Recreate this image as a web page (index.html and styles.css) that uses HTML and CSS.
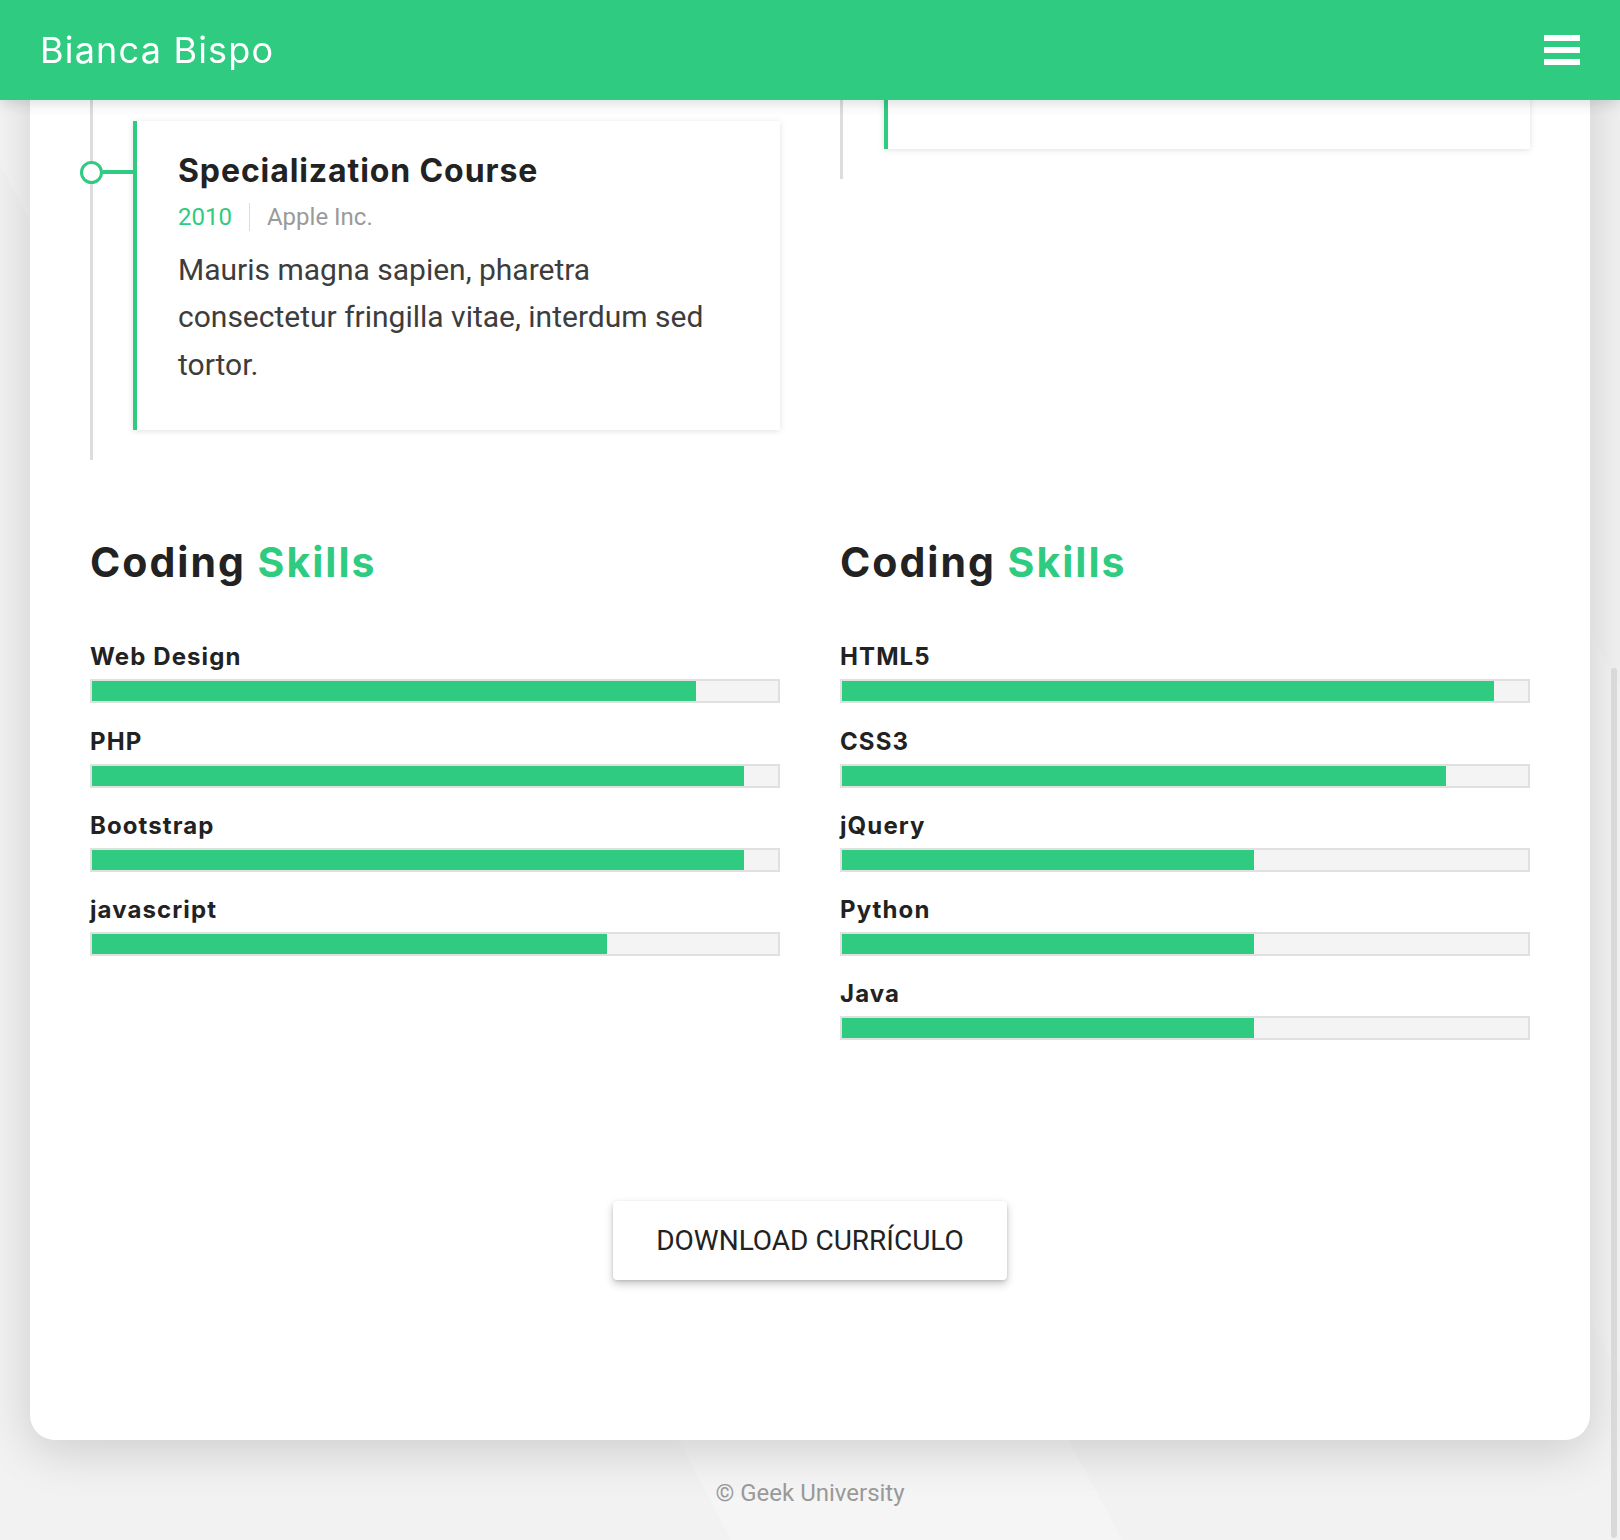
FILE: index.html
```html
<!DOCTYPE html>
<html lang="pt-BR">
<head>
<meta charset="utf-8">
<title>Bianca Bispo</title>
<link rel="stylesheet" href="styles.css">
</head>
<body>
<header class="topbar">
  <span class="brand">Bianca Bispo</span>
  <button class="menu" aria-label="Menu"><span></span><span></span><span></span></button>
</header>

<main class="sheet">
  <section class="grid timeline-row">
    <div class="timeline timeline--left">
      <article class="entry">
        <span class="entry-dot"></span>
        <h3 class="entry-title">Specialization Course</h3>
        <p class="entry-meta"><span class="entry-year">2010</span><span class="entry-org">Apple Inc.</span></p>
        <p class="entry-text">Mauris magna sapien, pharetra consectetur fringilla vitae, interdum sed tortor.</p>
      </article>
    </div>
    <div class="timeline timeline--right">
      <article class="entry entry--tail"></article>
    </div>
  </section>

  <section class="grid skills-row">
    <div class="skills">
      <h2 class="skills-title">Coding <span class="accent">Skills</span></h2>
      <div class="skill"><div class="skill-name">Web Design</div><div class="skill-bar"><div class="skill-fill" style="width:88%"></div></div></div>
      <div class="skill"><div class="skill-name">PHP</div><div class="skill-bar"><div class="skill-fill" style="width:95%"></div></div></div>
      <div class="skill"><div class="skill-name">Bootstrap</div><div class="skill-bar"><div class="skill-fill" style="width:95%"></div></div></div>
      <div class="skill"><div class="skill-name">javascript</div><div class="skill-bar"><div class="skill-fill" style="width:75%"></div></div></div>
    </div>
    <div class="skills">
      <h2 class="skills-title">Coding <span class="accent">Skills</span></h2>
      <div class="skill"><div class="skill-name">HTML5</div><div class="skill-bar"><div class="skill-fill" style="width:95%"></div></div></div>
      <div class="skill"><div class="skill-name">CSS3</div><div class="skill-bar"><div class="skill-fill" style="width:88%"></div></div></div>
      <div class="skill"><div class="skill-name">jQuery</div><div class="skill-bar"><div class="skill-fill" style="width:60%"></div></div></div>
      <div class="skill"><div class="skill-name">Python</div><div class="skill-bar"><div class="skill-fill" style="width:60%"></div></div></div>
      <div class="skill"><div class="skill-name">Java</div><div class="skill-bar"><div class="skill-fill" style="width:60%"></div></div></div>
    </div>
  </section>

  <div class="actions">
    <a class="btn" href="#">DOWNLOAD CURRÍCULO</a>
  </div>
</main>

<footer class="footer">© Geek University</footer>
<div class="scroll-thumb" aria-hidden="true"></div>
</body>
</html>
```

FILE: styles.css
```css
* { box-sizing: border-box; }

html { min-height: 100%; }
html, body { margin: 0; padding: 0; }

body {
  font-family: Roboto, "Liberation Sans", Arial, sans-serif;
  color: #222;
  background-color: #f2f2f2;
  background-image:
    linear-gradient(62deg, rgba(255,255,255,0) 0, rgba(255,255,255,0) 30%, rgba(255,255,255,0.25) 30%, rgba(255,255,255,0.25) 46%, rgba(255,255,255,0) 46%),
    linear-gradient(62deg, rgba(255,255,255,0) 0, rgba(255,255,255,0) 70%, rgba(255,255,255,0.18) 70%, rgba(255,255,255,0.18) 85%, rgba(255,255,255,0) 85%);
  background-attachment: fixed;
}

/* ---------- header ---------- */
.topbar {
  position: fixed;
  top: 0;
  left: 0;
  right: 0;
  height: 100px;
  z-index: 10;
  background: #2fcb80;
  display: flex;
  align-items: center;
  justify-content: space-between;
  padding: 0 40px 0 40px;
  box-shadow: 0 2px 14px rgba(0,0,0,0.16);
}

.brand {
  font-family: Inter, "Noto Sans", sans-serif;
  font-weight: 400;
  font-size: 36px;
  line-height: 1;
  letter-spacing: 1.2px;
  color: #fff;
}

.menu {
  width: 36px;
  height: 30px;
  padding: 0;
  border: 0;
  background: none;
  display: flex;
  flex-direction: column;
  justify-content: space-between;
  cursor: pointer;
}
.menu span {
  display: block;
  height: 6px;
  background: #fff;
}

/* ---------- sheet ---------- */
.sheet {
  margin: 0 30px;
  padding: 0 60px 160px;
  background: #fff;
  border-radius: 0 0 25px 25px;
  box-shadow: 0 10px 50px rgba(0,0,0,0.16);
}

.grid {
  display: grid;
  grid-template-columns: 1fr 1fr;
  column-gap: 60px;
  align-items: start;
}

/* ---------- timeline ---------- */
.timeline {
  border-left: 3px solid #dddddd;
}
.timeline--left { padding: 121px 0 30px; }
.timeline--right { padding: 0 0 30px; }

.entry {
  position: relative;
  margin-left: 40px;
  background: #fff;
  border-left: 4px solid #2fcb80;
  padding: 31px 41px 42px 41px;
  box-shadow: 0 1px 6px rgba(0,0,0,0.12);
}
.entry--tail {
  margin-left: 41px;
  height: 149px;
  padding: 0;
}

.entry-dot {
  position: absolute;
  left: -57px;
  top: 40px;
  width: 23px;
  height: 23px;
  border: 3px solid #2fcb80;
  border-radius: 50%;
  background: #fff;
}
.entry-dot::after {
  content: "";
  position: absolute;
  left: 20px;
  top: 6px;
  width: 33px;
  height: 3.5px;
  background: #2fcb80;
}

.entry-title {
  margin: 0;
  font-family: Inter, "Noto Sans", sans-serif;
  font-weight: 700;
  font-size: 32px;
  line-height: 37px;
  letter-spacing: 0.9px;
  color: #222;
}

.entry-meta {
  margin: 10px 0 0;
  font-size: 24px;
  line-height: 36px;
}
.entry-year { color: #2fcb80; }
.entry-org {
  color: #9a9a9a;
  margin-left: 17px;
  padding-left: 17px;
  border-left: 1px solid #dddddd;
}

.entry-text {
  margin: 10.5px 0 0;
  max-width: 548px;
  font-size: 30px;
  line-height: 47.6px;
  color: #3d3d3d;
}

/* ---------- skills ---------- */
.skills-row { padding-top: 78px; }

.skills-title {
  margin: 0 0 56px;
  font-family: Inter, "Noto Sans", sans-serif;
  font-weight: 700;
  font-size: 41px;
  line-height: 48px;
  letter-spacing: 2px;
  color: #222;
}
.accent { color: #2fcb80; }

.skill { margin-bottom: 23.3px; }

.skill-name {
  font-family: Inter, "Noto Sans", sans-serif;
  font-weight: 700;
  font-size: 24px;
  line-height: 29px;
  letter-spacing: 1.1px;
  color: #222;
  margin-bottom: 8px;
}

.skill-bar {
  height: 24px;
  border: 2px solid #e0e0e0;
  background: #f4f4f4;
}
.skill-fill {
  height: 100%;
  background: #2fcb80;
}

/* ---------- actions ---------- */
.actions {
  display: flex;
  justify-content: center;
  padding-top: 137px;
}

.btn {
  display: inline-block;
  padding: 25px 43px;
  font-size: 28px;
  line-height: 29px;
  color: #222;
  text-decoration: none;
  background: #fff;
  border-radius: 4px;
  box-shadow: 0 4px 8px rgba(0,0,0,0.22), 0 1px 3px rgba(0,0,0,0.12);
}

/* ---------- footer ---------- */
.footer {
  padding: 37px 0 30px;
  text-align: center;
  font-size: 24px;
  line-height: 33px;
  color: #999;
}

.scroll-thumb {
  position: fixed;
  right: 3px;
  top: 668px;
  width: 6px;
  height: 870px;
  border-radius: 3px;
  background: #d9d9d9;
}
```
